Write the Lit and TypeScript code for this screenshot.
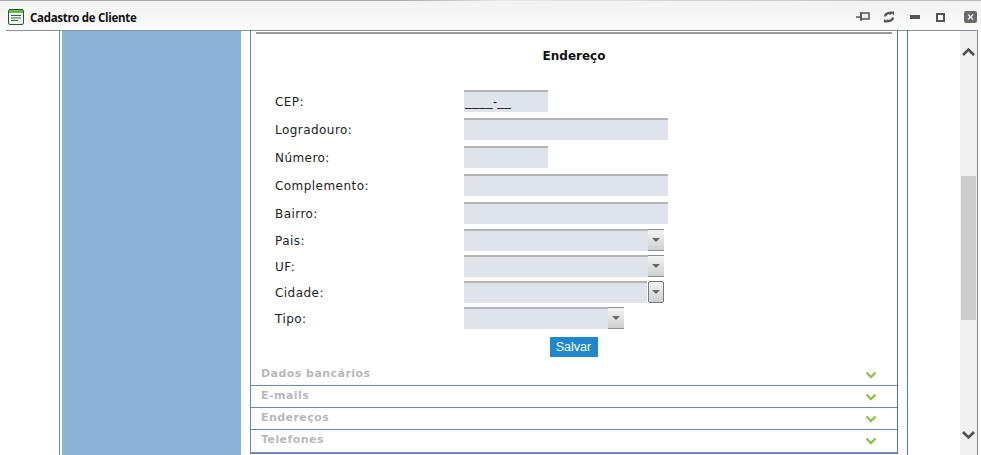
import { LitElement, html, css } from "lit";
import { customElement } from "lit/decorators.js";

const chevron = html`<svg class="chev" width="12" height="8" viewBox="0 0 12 8"><path d="M1.5 1.5 L6 6 L10.5 1.5" fill="none" stroke="#8fbf4f" stroke-width="2.4"/></svg>`;

@customElement("app-root")
export class AppRoot extends LitElement {
  static styles = css`
    :host { display: block; width: 981px; height: 455px; overflow: hidden; background: #fff; font-family: "DejaVu Sans", sans-serif; color: #111; }
    .win { display: flex; flex-direction: column; height: 455px; background: #fff; }
    .titlebar { height: 30px; flex: none; box-sizing: border-box; display: flex; align-items: center; padding: 3px 0 0 8px; background: linear-gradient(#f2f2f2, #fbfbfb); border-top: 1px solid; border-image: linear-gradient(to right, #a8a8a8 0, #a8a8a8 400px, #e8e8e8 500px, #b8b8b8 981px) 1; }
    .title { font: bold 11.5px "Open Sans", sans-serif; margin-left: 6px; color: #111; letter-spacing: -0.3px; }
    .tools { margin-left: auto; display: flex; align-items: center; margin-right: 2.5px; }
    .tool { width: 26px; height: 16px; display: flex; align-items: center; justify-content: center; }
    .tool.close { width: 17px; margin-left: 8px; }
    .body { flex: 1; min-height: 0; display: flex; margin: 0 3px 0 6px; border-top: 1px solid #8a8f96; border-right: 1px solid #8a8f96; background: #fff; }
    .content { flex: 1; min-width: 0; display: flex; padding-left: 53px; }
    .frame { width: 849px; box-sizing: border-box; border-left: 1px solid #5a93b4; border-right: 1px solid #3f84a8; display: flex; padding-left: 2px; }
    .side { width: 179px; flex: none; background: #8ab3d7; }
    .panel { width: 648px; box-sizing: border-box; margin-left: 9px; border-left: 1px solid #6c87a4; border-right: 1px solid #4d7a9e; padding-top: 1px; border-bottom: 2px solid #7487ad; display: flex; flex-direction: column; margin-bottom: auto; }
    .rule { height: 2px; background: #9a9a9a; margin: 0 5px; }
    h3 { font: bold 12px "DejaVu Sans", sans-serif; text-align: center; margin: 15px 0 0; height: 15px; line-height: 15px; letter-spacing: 0; color: #111; }
    .form { display: grid; grid-template-columns: 189px 1fr; padding: 26px 0 0 24px; }
    .lbl { font-size: 12px; letter-spacing: 0.45px; line-height: 24px; color: #222; height: 22px; }
    .r { margin-bottom: 6px; }
    .b { margin-bottom: 5px; }
    .s { margin-bottom: 4px; }
    .input { box-sizing: border-box; height: 22px; background: #dfe3ea; border-top: 2px solid #b2b4b6; width: 204px; }
    .input.short { width: 84px; font: 12px "Liberation Sans", sans-serif; color: #111; line-height: 20px; padding-left: 1px; letter-spacing: 0.3px; }
    .select { box-sizing: border-box; height: 22px; display: flex; width: 200px; }
    .select.t { width: 160px; }
    .select .f { flex: 1; background: #dfe3ea; border-top: 2px solid #b2b4b6; box-sizing: border-box; }
    .select .a { width: 16px; box-sizing: border-box; border-top: 1px solid #8c8c8c; border-bottom: 1px solid #8c8c8c; background: linear-gradient(#f4f4f4, #cfcfcf); display: flex; align-items: center; justify-content: center; }
    .select.focus .f { margin-right: 1px; }
    .select.focus .a { border: 1px solid #777; border-radius: 2px; }
    .tri { width: 0; height: 0; border: 4px solid transparent; border-top: 4px solid #666; border-bottom: 0; }
    .actions { display: flex; justify-content: center; padding: 8px 0 0 0; margin-left: -1px; }
    .btn { width: 48px; height: 20px; background: #1f88cc; color: #fff; font: 12.5px/20px "Liberation Sans", sans-serif; text-align: center; }
    .acc { margin-top: 7px; }
    .row { height: 22px; box-sizing: border-box; display: flex; align-items: center; justify-content: space-between; padding: 0 20px 2px 10px; border-bottom: 1px solid #6d88a6; font-size: 11px; font-weight: bold; color: #b8b8b8; letter-spacing: 0.45px; }
    .row:last-child { border-bottom: 0; padding-bottom: 3px; }
    .chev { margin-top: 3px; }
    .scroll { width: 17px; flex: none; margin-left: auto; background: #f0f0f0; position: relative; box-sizing: border-box; padding-top: 145px; }
    .thumb { height: 144px; background: #cdcdcd; margin: 0 1px; }
    .arrow { position: absolute; left: 2px; }
    .arrow.up { top: 16px; }
    .arrow.down { top: 399px; }
  `;

  labelRow(label: string, field: unknown, cls: string) {
    return html`<div class="lbl ${cls}">${label}</div><div class="${cls}">${field}</div>`;
  }

  sel(cls = "") {
    return html`<div class="select ${cls}"><div class="f"></div><div class="a"><div class="tri"></div></div></div>`;
  }

  render() {
    const iconStroke = "#555";
    return html`<div class="win">
      <div class="titlebar">
        <svg width="16" height="16" viewBox="0 0 16 16"><rect x="0.5" y="0.5" width="15" height="15" rx="1.5" fill="#f3f8ee" stroke="#1f5a3a"/><rect x="1" y="1" width="14" height="3" fill="#6fb550"/><path d="M3 6.5h10M3 9h10M3 11.5h7" stroke="#2a6a40" fill="none"/></svg>
        <span class="title">Cadastro de Cliente</span>
        <div class="tools">
          <div class="tool"><svg width="14" height="10" viewBox="0 0 14 10"><path d="M0 5h5" stroke="${iconStroke}" stroke-width="1.5"/><rect x="5" y="1" width="8" height="6" fill="#eee" stroke="${iconStroke}" stroke-width="1.5"/><path d="M5 0v9" stroke="${iconStroke}" stroke-width="1.5"/></svg></div>
          <div class="tool"><svg width="12" height="12" viewBox="0 0 12 12"><path d="M2 5.5a4 4 0 0 1 6.5-2.6" fill="none" stroke="${iconStroke}" stroke-width="2.4"/><path d="M7 0.5l4 0v4z" fill="${iconStroke}"/><path d="M10 6.5a4 4 0 0 1-6.5 2.6" fill="none" stroke="${iconStroke}" stroke-width="2.4"/><path d="M5 11.5l-4 0v-4z" fill="${iconStroke}"/></svg></div>
          <div class="tool"><svg width="10" height="4" viewBox="0 0 10 4"><rect width="10" height="4" fill="#555"/></svg></div>
          <div class="tool"><svg width="9" height="9" viewBox="0 0 9 9"><rect x="1" y="1" width="7" height="7" fill="#fff" stroke="#555" stroke-width="2"/></svg></div>
          <div class="tool close"><svg width="13" height="12" viewBox="0 0 13 12"><rect width="13" height="12" rx="2" fill="#6b6b6b"/><path d="M4 3.5l5 5M9 3.5l-5 5" stroke="#eee" stroke-width="1.3"/></svg></div>
        </div>
      </div>
      <div class="body">
        <div class="content">
          <div class="frame">
            <div class="side"></div>
            <div class="panel">
              <div class="rule"></div>
              <h3>Endereço</h3>
              <div class="form">
                ${this.labelRow("CEP:", html`<div class="input short">____-__</div>`, "r")}
                ${this.labelRow("Logradouro:", html`<div class="input"></div>`, "r")}
                ${this.labelRow("Número:", html`<div class="input short"></div>`, "r")}
                ${this.labelRow("Complemento:", html`<div class="input"></div>`, "r")}
                ${this.labelRow("Bairro:", html`<div class="input"></div>`, "b")}
                ${this.labelRow("Pais:", this.sel(), "s")}
                ${this.labelRow("UF:", this.sel(), "s")}
                ${this.labelRow("Cidade:", this.sel("focus"), "s")}
                <div class="lbl">Tipo:</div><div>${this.sel("t")}</div>
              </div>
              <div class="actions"><div class="btn">Salvar</div></div>
              <div class="acc">
                <div class="row"><span>Dados bancários</span>${chevron}</div>
                <div class="row"><span>E-mails</span>${chevron}</div>
                <div class="row"><span>Endereços</span>${chevron}</div>
                <div class="row"><span>Telefones</span>${chevron}</div>
              </div>
            </div>
          </div>
        </div>
        <div class="scroll">
          <svg class="arrow up" width="13" height="10" viewBox="0 0 13 10"><path d="M1 8 L6.5 2.5 L12 8" fill="none" stroke="#505050" stroke-width="2.6"/></svg>
          <div class="thumb"></div>
          <svg class="arrow down" width="13" height="10" viewBox="0 0 13 10"><path d="M1 2 L6.5 7.5 L12 2" fill="none" stroke="#505050" stroke-width="2.6"/></svg>
        </div>
      </div>
    </div>`;
  }
}
